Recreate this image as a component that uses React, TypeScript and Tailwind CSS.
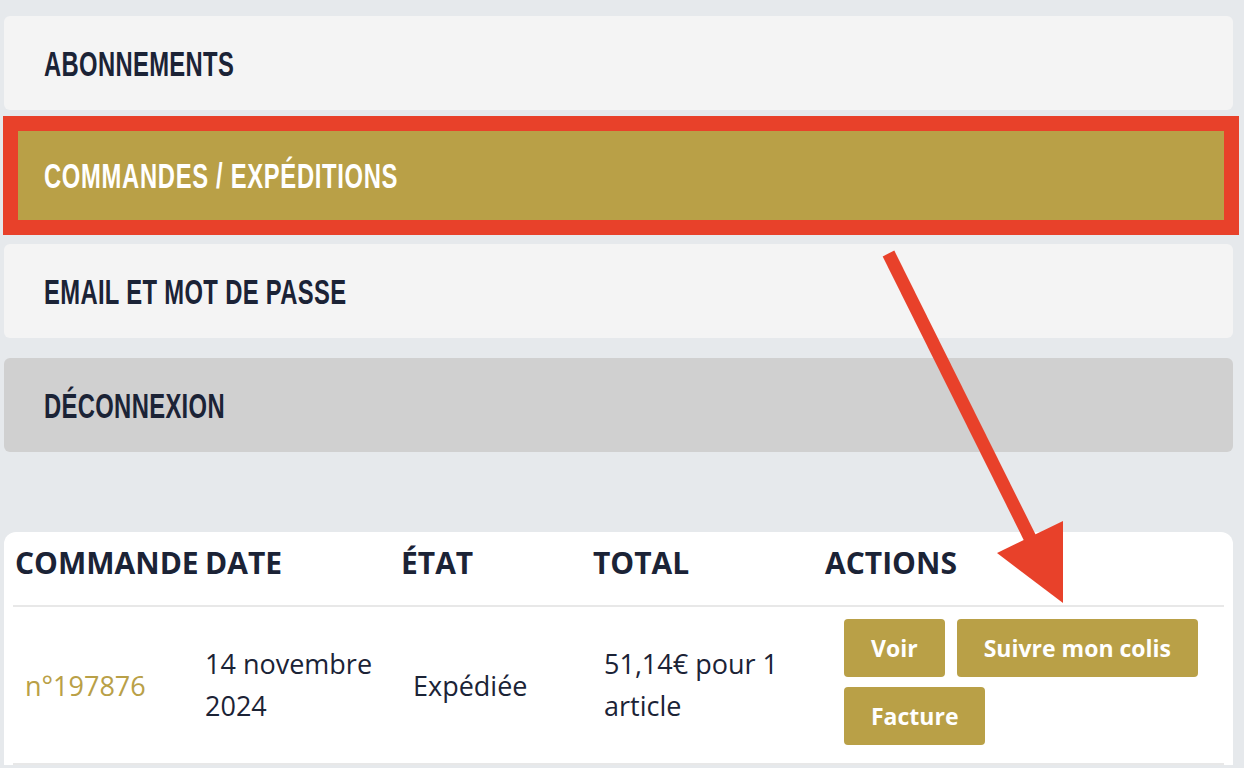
import React from "react";

const menuText =
  "inline-block origin-left scale-x-[0.68] text-[35px] font-bold leading-none tracking-[0.5px] font-['Liberation_Sans',Arial,sans-serif]";

const MenuCard = ({ label, bg }: { label: string; bg: string }) => (
  <div className={`flex h-[94px] w-[1229px] items-center rounded-[6px] pl-[40px] text-[#1b2336] ${bg}`}>
    <span className={menuText}>{label}</span>
  </div>
);

const Button = ({ children }: { children: React.ReactNode }) => (
  <button className="flex h-[58px] items-center rounded-[4px] bg-[#b9a047] px-[27px] text-[23px] font-bold text-white">
    {children}
  </button>
);

export default function App() {
  return (
    <div className="relative h-[768px] w-[1244px] overflow-hidden bg-[#e6e9ec] pl-[4px] pt-[16px]">
      <MenuCard label="ABONNEMENTS" bg="bg-[#f4f4f4]" />

      <div className="ml-[-1px] mt-[6px] w-[1236px] border-[15px] border-[#e8412a]">
        <div className="flex h-[89px] items-center bg-[#b9a047] pl-[26px] text-white">
          <span className={`${menuText} tracking-[1px]`}>COMMANDES / EXPÉDITIONS</span>
        </div>
      </div>

      <div className="mt-[9px]">
        <MenuCard label="EMAIL ET MOT DE PASSE" bg="bg-[#f4f4f4]" />
      </div>
      <div className="mt-[20px]">
        <MenuCard label="DÉCONNEXION" bg="bg-[#d0d0d0]" />
      </div>

      {/* orders table */}
      <div className="mt-[80px] w-[1229px] rounded-t-[12px] bg-white px-[9px] font-['Open_Sans',sans-serif] text-[#1b2336]">
        <div className="flex h-[75px] items-center border-b-2 border-[#e8e8e8] pb-[12px] text-[30px] font-bold">
          <div className="w-[180px] whitespace-nowrap pl-[2px]">COMMANDE</div>
          <div className="w-[208px] pl-[12px]">DATE</div>
          <div className="w-[190px]">ÉTAT</div>
          <div className="w-[234px] pl-[2px]">TOTAL</div>
          <div>ACTIONS</div>
        </div>

        <div className="flex h-[158px] items-center border-b-2 border-[#e8e8e8] text-[27px] leading-[42px]">
          <div className="w-[180px] pl-[12px] pt-[2px] text-[#b9a047]">n°197876</div>
          <div className="w-[208px] pl-[12px]">
            <div className="w-[190px]">14 novembre 2024</div>
          </div>
          <div className="w-[190px] pl-[12px] pt-[2px]">Expédiée</div>
          <div className="w-[234px] pl-[13px]">
            <div className="w-[200px]">51,14€ pour 1 article</div>
          </div>
          <div className="flex w-[380px] flex-wrap gap-x-[12px] gap-y-[10px] self-start pl-[19px] pt-[12px]">
            <Button>Voir</Button>
            <Button>Suivre mon colis</Button>
            <Button>Facture</Button>
          </div>
        </div>
      </div>

      {/* annotation arrow */}
      <svg className="pointer-events-none absolute left-0 top-0" width="1244" height="768" viewBox="0 0 1244 768">
        <line x1="888.5" y1="253.5" x2="1035" y2="548" stroke="#e8412a" strokeWidth="13" />
        <polygon points="997,553 1063,521 1063,603" fill="#e8412a" />
      </svg>
    </div>
  );
}
